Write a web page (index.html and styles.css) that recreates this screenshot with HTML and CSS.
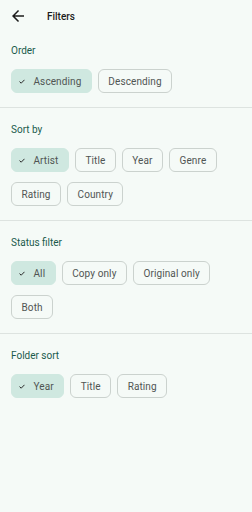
FILE: index.html
```html
<!DOCTYPE html>
<html lang="en">
<head>
  <meta charset="UTF-8"/>
  <meta name="viewport" content="width=device-width, initial-scale=1.0"/>
  <title>Filters</title>
  <link rel="stylesheet" href="styles.css">
</head>
<body>
  <!-- Top bar -->
  <header class="topbar">
    <svg class="back" viewBox="0 0 24 24" width="18" height="18">
      <path d="M20 11H7.83l5.59-5.59L12 4l-8 8 8 8 1.41-1.41L7.83 13H20v-2z" fill="#1c1c1c"/>
    </svg>
    <span class="title">Filters</span>
  </header>

  <!-- Order -->
  <section class="group first">
    <div class="group-label">Order</div>
    <div class="chips">
      <div class="chip selected"><svg class="check" viewBox="0 0 6 5" width="6" height="5"><path d="M0.5 2.6 L2.2 4.2 L5.5 0.8" fill="none" stroke="#2b2b2b" stroke-width="1"/></svg>Ascending</div>
      <div class="chip">Descending</div>
    </div>
  </section>

  <!-- Sort by -->
  <section class="group">
    <div class="group-label">Sort by</div>
    <div class="chips">
      <div class="chip selected"><svg class="check" viewBox="0 0 6 5" width="6" height="5"><path d="M0.5 2.6 L2.2 4.2 L5.5 0.8" fill="none" stroke="#2b2b2b" stroke-width="1"/></svg>Artist</div>
      <div class="chip">Title</div>
      <div class="chip">Year</div>
      <div class="chip">Genre</div>
      <div class="chip">Rating</div>
      <div class="chip">Country</div>
    </div>
  </section>

  <!-- Status filter -->
  <section class="group">
    <div class="group-label">Status filter</div>
    <div class="chips">
      <div class="chip selected"><svg class="check" viewBox="0 0 6 5" width="6" height="5"><path d="M0.5 2.6 L2.2 4.2 L5.5 0.8" fill="none" stroke="#2b2b2b" stroke-width="1"/></svg>All</div>
      <div class="chip">Copy only</div>
      <div class="chip">Original only</div>
      <div class="chip">Both</div>
    </div>
  </section>

  <!-- Folder sort -->
  <section class="group last">
    <div class="group-label">Folder sort</div>
    <div class="chips">
      <div class="chip selected"><svg class="check" viewBox="0 0 6 5" width="6" height="5"><path d="M0.5 2.6 L2.2 4.2 L5.5 0.8" fill="none" stroke="#2b2b2b" stroke-width="1"/></svg>Year</div>
      <div class="chip">Title</div>
      <div class="chip">Rating</div>
    </div>
  </section>
</body>
</html>
```

FILE: styles.css
```css
:root {
  --bg: #f5faf7;
  --labelColor: #1a5a4c;
  --chipText: #505553;
  --chipBorder: #cbd2ce;
  --chipSelected: #cfe8e0;
  --divider: #dde3e0;
}
body {
  margin: 0;
  background-color: var(--bg);
  font-family: Roboto, "Noto Sans", sans-serif;
  min-height: 512px;
}
/* Top app bar */
.topbar {
  height: 32px;
  display: flex;
  align-items: center;
}
.back {
  margin-left: 9px;
  margin-right: 20px;
}
.title {
  font-size: 10px;
  font-weight: 500;
  color: #1c1c1c;
}
/* Each filter group, separated by a thin line */
.group {
  padding: 15px 11px 14px;
  border-bottom: 1px solid var(--divider);
}
.group.first {
  padding-top: 12px;
}
.group.last {
  border-bottom: none;
}
.group-label {
  font-size: 10px;
  line-height: 14px;
  color: var(--labelColor);
  margin-bottom: 11px;
}
/* Chip rows */
.chips {
  display: flex;
  flex-wrap: wrap;
  gap: 10px 6px;
}
.chip {
  height: 24px;
  box-sizing: border-box;
  display: flex;
  align-items: center;
  padding: 0 9.5px;
  border: 1px solid var(--chipBorder);
  border-radius: 6px;
  font-size: 10px;
  color: var(--chipText);
  letter-spacing: 0.1px;
}
.chip.selected {
  background-color: var(--chipSelected);
  border-color: var(--chipSelected);
  padding-left: 6.5px;
}
.check {
  margin-right: 9px;
}
```
